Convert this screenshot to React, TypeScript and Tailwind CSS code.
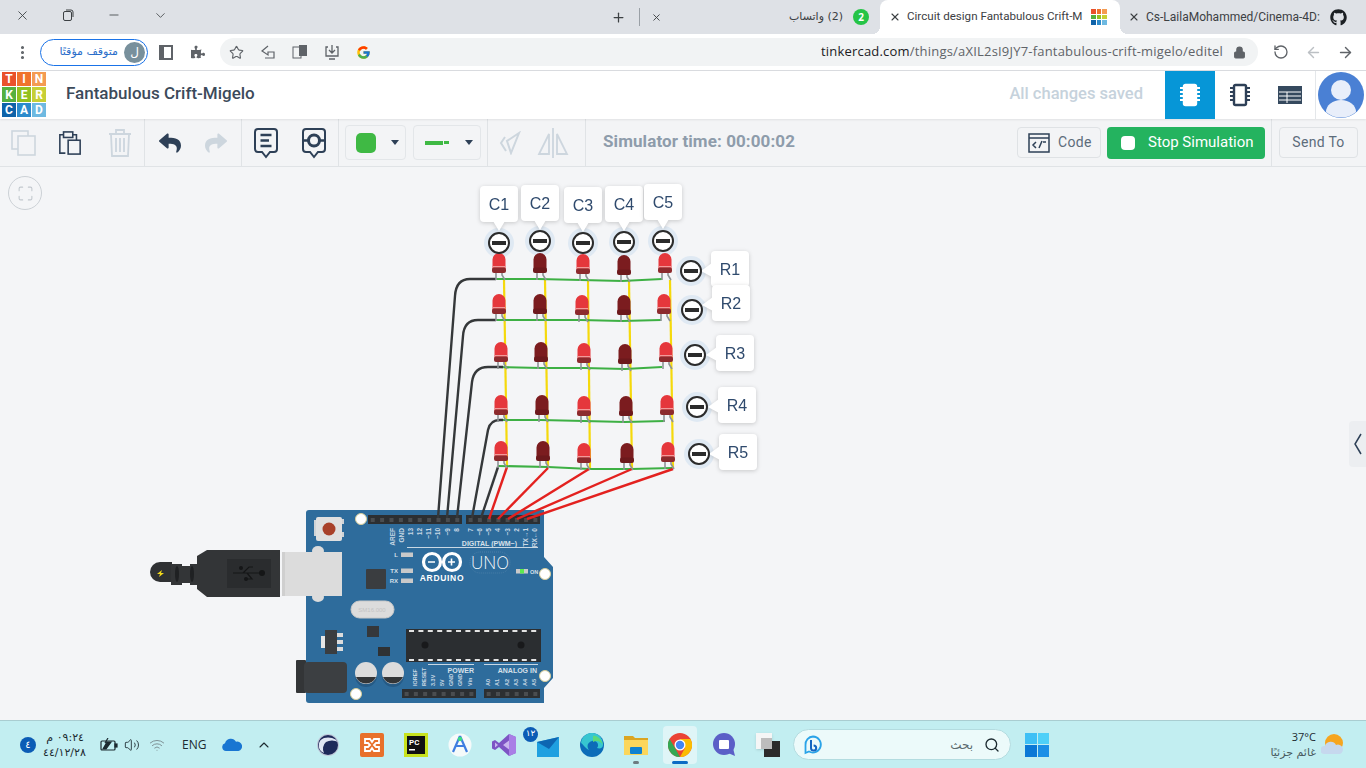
import React from 'react';
import { X, Minus, ChevronDown, Plus, Star, Lock, RotateCw, ArrowLeft, ArrowRight, Search, EllipsisVertical, ChevronUp, Volume2, Wifi, Maximize } from 'lucide-react';
import { FaGithub, FaPuzzlePiece, FaReply, FaShare } from 'react-icons/fa';
import { FcGoogle } from 'react-icons/fc';

const LOGO = [
  ['T', 'bg-[#e9512b]'], ['I', 'bg-[#f0732d]'], ['N', 'bg-[#f49b52]'],
  ['K', 'bg-[#55b03f]'], ['E', 'bg-[#93c01f]'], ['R', 'bg-[#c7cf35]'],
  ['C', 'bg-[#0f63a9]'], ['A', 'bg-[#2c8bcc]'], ['D', 'bg-[#6eb9e1]'],
];

const LEDS = [
  [[499, 253], [540, 253], [583, 254], [624, 255], [665, 253]],
  [[499, 294], [540, 294], [582, 295], [624, 295], [664, 294]],
  [[501, 342], [541, 342], [584, 343], [625, 344], [666, 342]],
  [[501, 395], [542, 395], [584, 396], [626, 396], [667, 395]],
  [[501, 441], [543, 441], [584, 443], [627, 443], [668, 442]],
];

const GREEN = [
  '496,279 538,279 581,280 622,281 662,279',
  '496,320 538,320 581,320 622,321 661,320',
  '498,367 541,368 584,368 625,369 662,367',
  '498,420 541,420 584,421 625,422 665,421',
  '498,466 548,467 590,469 632,469 672,468',
];

const YELLOW = [
  [504, 280, 507, 466],
  [545, 280, 548, 466],
  [588, 280, 590, 468],
  [629, 281, 632, 468],
  [670, 280, 673, 468],
];

const BLACK = [
  'M438 518 L455 296 Q456 279 470 279 L496 279',
  'M447 518 L463 336 Q464 320 478 320 L496 320',
  'M457 518 L472 382 Q474 367 488 367 L503 367',
  'M472 518 L488 430 Q490 420 500 420 L503 420',
  'M481 518 L498 467',
];

const RED = [
  [489, 519, 507, 467],
  [498, 519, 548, 468],
  [508, 519, 589, 469],
  [517, 519, 632, 469],
  [527, 519, 673, 469],
];

const TERMINALS = [
  [499, 243], [540, 241], [583, 243], [624, 242], [663, 241],
  [691, 271], [692, 310], [695, 355], [697, 407], [699, 454],
];

const COL_LABELS = [
  ['C1', 480, 186], ['C2', 521, 185], ['C3', 564, 187], ['C4', 605, 186], ['C5', 644, 184],
] as const;
const ROW_LABELS = [
  ['R1', 711, 251], ['R2', 712, 285], ['R3', 716, 335], ['R4', 718, 387], ['R5', 719, 434],
] as const;

const TOP_PINS = [
  ['AREF', 393], ['GND', 402], ['13', 411], ['12', 420], ['~11', 429], ['~10', 438], ['~9', 448], ['8', 457],
  ['7', 471], ['~6', 480], ['~5', 489], ['4', 498], ['~3', 508], ['2', 517], ['TX→1', 526], ['RX←0', 535],
] as const;
const BOTTOM_PINS = [
  ['IOREF', 416], ['RESET', 425], ['3.3V', 434], ['5V', 443], ['GND', 452], ['GND', 461], ['Vin', 471],
  ['A0', 489], ['A1', 498], ['A2', 508], ['A3', 517], ['A4', 526], ['A5', 535],
] as const;

const Led = ({ x, top, on }: { x: number; top: number; on: boolean }) => (
  <g>
    <path d={`M${x - 3} ${top + 18} V${top + 27} M${x + 3} ${top + 18} L${x + 3} ${top + 22} L${x + 6} ${top + 27}`} stroke="#8f9496" strokeWidth="1.6" fill="none" />
    <path d={`M${x - 6.5} ${top + 17} V${top + 6.5} a6.5 6.5 0 0 1 13 0 V${top + 17} Z`} fill={on ? '#e5373c' : '#7b1c1f'} />
    {on && <rect x={x - 6} y={top + 13} width="12" height="1.5" fill="#f29a9a" />}
    <rect x={x - 7} y={top + 14.5} width="14" height="5.5" rx="2" fill={on ? '#8c2a2d' : '#6c191c'} />
  </g>
);

const Terminal = ({ x, y }: { x: number; y: number }) => (
  <g>
    <circle cx={x} cy={y} r="10" fill="#fff" stroke="#2b2b2b" strokeWidth="2" />
    <rect x={x - 7} y={y - 2} width="14" height="4" fill="#2b2b2b" />
  </g>
);

const Header = ({ x, y, pins, w }: { x: number; y: number; pins: number; w: number }) => {
  const pitch = w / pins;
  return (
    <g>
      <rect x={x} y={y} width={w} height="9" fill="#2c2f32" />
      {Array.from({ length: pins }).map((_, i) => (
        <rect key={i} x={x + i * pitch + pitch / 2 - 2} y={y + 3} width="4" height="4" fill="#4a4d50" />
      ))}
    </g>
  );
};

const Circuit = () => (
  <svg width="1366" height="553" viewBox="0 167 1366 553" className="absolute inset-0" style={{ fontFamily: '"Liberation Sans", sans-serif' }}>
    {/* usb cable */}
    <path d="M172 562 H160 a10 10 0 0 0 0 20 H172 Z" fill="#2f3133" />
    <path d="M157 574 l5 -4 -1 3 3 0 -5 4 1 -3 z" fill="#f3d91b" />
    <path d="M171 564 h11 v2 h8 v-2 h7 v21 h-7 v-2 h-8 v2 h-11 Z" fill="#333537" />
    <ellipse cx="177" cy="574" rx="2" ry="8" fill="#1f2123" />
    <ellipse cx="192" cy="574" rx="2" ry="8" fill="#1f2123" />
    <path d="M197 556 L207 550 H280 V597 H207 L197 589 Z" fill="#333537" />
    <rect x="227" y="559" width="44" height="29" fill="#2a2c2e" />
    <path d="M233 573 H262 M243 573 L249 567 H253 M247 573 L252 579 H246" stroke="#151617" strokeWidth="1.2" fill="none" />
    <circle cx="262" cy="573" r="3" fill="#151617" />
    <circle cx="241" cy="568" r="2" fill="#151617" />
    <circle cx="246" cy="579" r="2" fill="#151617" />

    {/* board */}
    <path d="M309 510 H544 V557 L553 567 V678 L544 688 V703 H309 a3 3 0 0 1 -3 -3 V513 a3 3 0 0 1 3 -3 Z" fill="#2e6c9c" />
    <path d="M314 520 h4 v16 h-4 Z M340 519 h4 v5 h-4 Z M340 532 h4 v5 h-4 Z" fill="#cfd3d6" />
    <rect x="316" y="517" width="26" height="24" rx="2" fill="#dfe0e0" />
    <circle cx="329" cy="529" r="6.5" fill="#a8412a" />
    <ellipse cx="318" cy="551" rx="6" ry="5" fill="#dcdcdc" />
    <ellipse cx="318" cy="597" rx="6" ry="5" fill="#dcdcdc" />
    <rect x="282" y="552" width="60" height="44" fill="#dcdcdc" />
    <rect x="282" y="552" width="3" height="44" fill="#cfcfcf" />
    <rect x="351" y="601" width="43" height="17" rx="8.5" fill="#dcdcdc" stroke="#c8c8c8" />
    <text x="372" y="612" fontSize="6" fill="#c4c4c4" textAnchor="middle">SM16.000</text>
    <rect x="366" y="569" width="20" height="20" rx="1" fill="#3a3d40" />
    <rect x="367" y="626" width="12" height="11" fill="#35383b" />
    <rect x="378" y="647" width="12" height="9" fill="#2f3234" />
    <rect x="321" y="636" width="5" height="12" fill="#e6e6e6" />
    <rect x="325" y="630" width="12" height="24" fill="#3a3d40" />
    <path d="M337 633 h6 v4 h-6 Z M337 640 h6 v4 h-6 Z M337 647 h6 v4 h-6 Z" fill="#dcdcdc" />
    <rect x="296" y="660" width="10" height="33" rx="1" fill="#333537" />
    <rect x="304" y="662" width="43" height="31" rx="4" fill="#3c3f42" />
    {[366, 393].map((cx) => (
      <g key={cx}>
        <circle cx={cx} cy={676} r="11" fill="#255a85" />
        <circle cx={cx} cy={673} r="11" fill="#dcdcdc" />
        <path d={`M${cx - 10} 677 h20 a11 11 0 0 1 -20 0 Z`} fill="#333537" />
      </g>
    ))}
    <Header x={368} y={515} pins={10} w={94} />
    <Header x={466} y={515} pins={8} w={74} />
    <Header x={402} y={689} pins={8} w={74} />
    <Header x={484} y={689} pins={6} w={56} />
    <rect x="406" y="629" width="135" height="33" fill="#2b2e31" />
    {Array.from({ length: 14 }).map((_, i) => (
      <g key={i} fill="#e4e4e4">
        <rect x={409 + i * 9.4} y="630" width="5" height="2" />
        <rect x={409 + i * 9.4} y="659" width="5" height="2" />
      </g>
    ))}
    <circle cx="425" cy="645" r="3.5" fill="#18191b" />
    <circle cx="521" cy="645" r="3.5" fill="#18191b" />
    {[[361, 519], [545, 574], [545, 676], [356, 694]].map(([cx, cy]) => (
      <circle key={`${cx}-${cy}`} cx={cx} cy={cy} r="5.5" fill="#fff" stroke="#d9cf9a" />
    ))}

    {/* silk screen */}
    {TOP_PINS.map(([t, x]) => (
      <text key={t} transform={`rotate(-90 ${x} 528)`} x={x} y={528} fontSize="6.5" fontWeight="700" fill="#c9d8e4" textAnchor="end" dominantBaseline="middle">{t}</text>
    ))}
    {BOTTOM_PINS.map(([t, x], i) => (
      <text key={i} transform={`rotate(-90 ${x} 686)`} x={x} y={686} fontSize="5.5" fontWeight="700" fill="#c9d8e4" dominantBaseline="middle">{t}</text>
    ))}
    <text x="517" y="546" fontSize="7" fontWeight="700" fill="#d5e0ea" textAnchor="end">DIGITAL (PWM~)</text>
    <rect x="407" y="547" width="131" height="1" fill="#c9d8e4" />
    <rect x="428" y="664" width="46" height="1" fill="#c9d8e4" />
    <rect x="484" y="664" width="54" height="1" fill="#c9d8e4" />
    <text x="474" y="673" fontSize="7" fontWeight="700" fill="#d5e0ea" textAnchor="end">POWER</text>
    <text x="537" y="673" fontSize="7" fontWeight="700" fill="#d5e0ea" textAnchor="end">ANALOG IN</text>
    {[['L', 555], ['TX', 571], ['RX', 581]].map(([t, y]) => (
      <g key={t}>
        <text x="398" y={Number(y) + 2} fontSize="6" fontWeight="700" fill="#d5e0ea" textAnchor="end">{t}</text>
        <rect x="401" y={Number(y) - 2.5} width="12" height="4.5" fill="#c9c9c9" />
      </g>
    ))}
    <circle cx="432" cy="562" r="8.5" fill="none" stroke="#fff" strokeWidth="3.2" />
    <circle cx="452" cy="562" r="8.5" fill="none" stroke="#fff" strokeWidth="3.2" />
    <path d="M428 562 h7 M448 562 h7 M451.5 558.5 v7" stroke="#fff" strokeWidth="1.6" />
    <text x="442" y="581" fontSize="8.5" fontWeight="700" letterSpacing="0.7" fill="#fff" textAnchor="middle">ARDUINO</text>
    <rect x="470" y="552" width="40" height="21" rx="10" fill="none" stroke="#4a7fa9" strokeDasharray="1 1" />
    <text x="490" y="569" fontSize="17" fill="#fff" textAnchor="middle" style={{ fontFamily: 'Inter, sans-serif', fontWeight: 200 }}>UNO</text>
    <rect x="516" y="569" width="12" height="4.5" fill="#c9c9c9" />
    <rect x="520" y="569" width="4" height="4.5" fill="#5dea4e" />
    <text x="530" y="574" fontSize="5.5" fontWeight="700" fill="#d5e0ea">ON</text>

    {/* terminal halos sit below the leds */}
    {TERMINALS.map(([x, y]) => (
      <circle key={x} cx={x} cy={y} r="15" fill="#dfe9f3" />
    ))}

    {/* wires go under the leds */}
    {YELLOW.map(([a, b, c, d]) => (
      <line key={a} x1={a} y1={b} x2={c} y2={d} stroke="#f5d90c" strokeWidth="2.2" />
    ))}
    {GREEN.map((p) => (
      <polyline key={p} points={p} fill="none" stroke="#3db044" strokeWidth="2.2" />
    ))}
    {BLACK.map((d) => (
      <path key={d} d={d} fill="none" stroke="#35383a" strokeWidth="2.4" />
    ))}
    {RED.map(([a, b, c, d]) => (
      <line key={a} x1={a} y1={b} x2={c} y2={d} stroke="#e3211f" strokeWidth="2.4" />
    ))}
    {LEDS.flat().map(([x, top], i) => (
      <Led key={i} x={x} top={top} on={i % 5 !== 1 && i % 5 !== 3} />
    ))}

    {/* terminal labels */}
    {COL_LABELS.map(([t, x, y]) => (
      <g key={t} className="drop-shadow-[0_1px_2px_rgba(0,0,0,0.18)]">
        <path d={`M${x + 13} ${y + 35} L${x + 19} ${y + 45} L${x + 25} ${y + 35} Z`} fill="#fff" />
        <rect x={x} y={y} width="38" height="36" rx="4" fill="#fff" />
        <text x={x + 19} y={y + 24} fontSize="16" fill="#2f4a6d" textAnchor="middle">{t}</text>
      </g>
    ))}
    {ROW_LABELS.map(([t, x, y]) => (
      <g key={t} className="drop-shadow-[0_1px_2px_rgba(0,0,0,0.18)]">
        <path d={`M${x + 1} ${y + 12} L${x - 10} ${y + 20} L${x + 1} ${y + 26} Z`} fill="#fff" />
        <rect x={x} y={y} width="38" height="36" rx="4" fill="#fff" />
        <text x={x + 19} y={y + 24} fontSize="16" fill="#2f4a6d" textAnchor="middle">{t}</text>
      </g>
    ))}
    {TERMINALS.map(([x, y]) => (
      <Terminal key={x} x={x} y={y} />
    ))}
  </svg>
);

const ChipIcon = ({ className, fill }: { className: string; fill: string }) => (
  <svg width="24" height="24" viewBox="0 0 24 24" className={className}>
    <rect x="6" y="2" width="12" height="20" rx="1.5" fill={fill} stroke="currentColor" strokeWidth="2.4" />
    <path d="M2 5h3M2 9h3M2 13h3M2 17h3M19 5h3M19 9h3M19 13h3M19 17h3" stroke="currentColor" strokeWidth="2" />
  </svg>
);

const Note = ({ eye }: { eye?: boolean }) => (
  <svg width="26" height="32" viewBox="0 0 26 32" fill="none" stroke="#2e4057" strokeWidth="2">
    <path d="M5 2 H21 a3 3 0 0 1 3 3 V22 a3 3 0 0 1 -3 3 H17 L13 30 L9 25 H5 a3 3 0 0 1 -3 -3 V5 a3 3 0 0 1 3 -3 Z" />
    {eye ? (
      <>
        <path d="M3 13.5 H7 M19 13.5 H23" strokeWidth="2.6" />
        <circle cx="13" cy="13.5" r="5.5" strokeWidth="3" />
      </>
    ) : (
      <path d="M7.5 8 H18.5 M7.5 13.5 H16 M7.5 19 H18.5" strokeWidth="2.4" />
    )}
  </svg>
);

const Divider = () => <div className="w-px self-stretch bg-[#e0e3e6]" />;

const TaskSlot = ({ children, active }: { children: React.ReactNode; active?: boolean }) => (
  <div className={`relative h-[38px] flex items-center justify-center rounded ${active ? 'w-[34px] mx-[5px] bg-[#dff5f7]' : 'w-[44px]'}`}>{children}</div>
);

export default function App() {
  return (
    <div className="w-[1366px] h-[768px] flex flex-col overflow-hidden bg-white" style={{ fontFamily: '"Open Sans", "DejaVu Sans", sans-serif' }}>
      {/* tab strip */}
      <div className="h-[34px] flex bg-[#dee1e6] text-[#3c4043]">
        <div className="w-[45px] flex items-center justify-center pb-1"><X size={15} strokeWidth={1.4} /></div>
        <div className="w-[46px] flex items-center justify-center pb-1">
          <svg width="12" height="12" viewBox="0 0 12 12" fill="none" stroke="currentColor"><rect x="1.5" y="2.5" width="8" height="9" rx="1.5" /><path d="M4 1 H9 a2 2 0 0 1 2 2 V8" /></svg>
        </div>
        <div className="w-[46px] flex items-center justify-center pb-1"><Minus size={14} strokeWidth={1.4} /></div>
        <div className="w-[46px] flex items-center justify-center pb-1"><ChevronDown size={15} strokeWidth={1.3} /></div>
        <div className="ml-[426px] w-[18px] flex items-center justify-center"><Plus size={15} strokeWidth={2} /></div>
        <div className="ml-[12px] my-[8px] w-px bg-[#9aa0a6]" />
        <div className="ml-[10px] w-[12px] flex items-center justify-center"><X size={11} strokeWidth={2} /></div>
        <div className="ml-[127px] w-[53px] flex items-center justify-end text-[11px] whitespace-nowrap" dir="rtl" style={{ fontFamily: '"DejaVu Sans", sans-serif' }}>(2) واتساب</div>
        <div className="w-[38px] flex items-center justify-center">
          <div className="w-4 h-4 rounded-full bg-[#25c447] flex items-center justify-center text-[10px] font-bold text-white">2</div>
        </div>
        <div className="relative w-[240px] bg-white rounded-t-[8px] flex items-center text-[11.6px] text-[#3c4043]" style={{ fontFamily: 'Roboto, sans-serif' }}>
          <div className="absolute left-[-8px] bottom-0 w-2 h-2 bg-[radial-gradient(circle_at_0_0,transparent_8px,white_8px)]" />
          <div className="absolute right-[-8px] bottom-0 w-2 h-2 bg-[radial-gradient(circle_at_100%_0,transparent_8px,white_8px)]" />
          <X size={12} strokeWidth={2.2} className="ml-[9px] shrink-0" />
          <span className="ml-[6px] w-[176px] whitespace-nowrap">Circuit design Fantabulous Crift-M</span>
          <div className="ml-[8px] w-[16px] h-[16px] grid grid-cols-3 gap-px shrink-0">
            {LOGO.map(([t, c]) => <div key={t} className={c} />)}
          </div>
        </div>
        <div className="flex-1 flex items-center text-[12px]" style={{ fontFamily: 'Roboto, sans-serif' }}>
          <X size={12} strokeWidth={2.2} className="ml-[8px] shrink-0" />
          <span className="ml-[6px] w-[172px] whitespace-nowrap">Cs-LailaMohammed/Cinema-4D:</span>
          <FaGithub size={17} className="ml-[12px] text-[#1b1f23] shrink-0" />
        </div>
      </div>

      {/* address bar */}
      <div className="h-[37px] flex items-center bg-white border-b border-[#dadce0] text-[#5f6368]">
        <div className="w-[40px] flex justify-center pl-[4px]"><EllipsisVertical size={17} strokeWidth={2.4} /></div>
        <div className="w-[108px] h-[27px] flex items-center justify-end rounded-full border border-[#1a73e8] pr-[2px]">
          <span className="text-[11px] text-[#2a6dc9] mr-[6px] whitespace-nowrap" dir="rtl" style={{ fontFamily: '"DejaVu Sans", sans-serif' }}>متوقف مؤقتًا</span>
          <div className="w-[21px] h-[21px] rounded-full bg-[#78909c] text-white text-[12px] flex items-center justify-center">ل</div>
        </div>
        <div className="w-[36px] flex justify-center">
          <div className="w-[14px] h-[15px] border-[2px] border-[#5f6368] border-l-[5px]" />
        </div>
        <div className="w-[28px] flex justify-center"><FaPuzzlePiece size={14} /></div>
        <div className="ml-[8px] w-[1038px] h-[28px] rounded-full bg-[#f1f3f4] flex items-center pl-[9px]">
          <Star size={15} strokeWidth={1.8} />
          <svg width="16" height="16" viewBox="0 0 16 16" fill="none" stroke="currentColor" strokeWidth="1.2" className="ml-[16px]">
            <path d="M8 2 L2 7 L8 11 V8 H14 V14 H5" />
          </svg>
          <svg width="16" height="16" viewBox="0 0 16 16" className="ml-[16px]">
            <rect x="1" y="3" width="8" height="11" fill="none" stroke="currentColor" />
            <rect x="7" y="1" width="8" height="11" fill="currentColor" />
          </svg>
          <svg width="16" height="16" viewBox="0 0 16 16" fill="none" stroke="currentColor" strokeWidth="1.3" className="ml-[16px]">
            <path d="M4 3 H2 V12 H14 V3 H12 M8 1 V9 M5 6 L8 9 L11 6 M5 15 H11" />
          </svg>
          <FcGoogle size={15} className="ml-[16px]" />
          <span className="ml-auto text-[13px] tracking-[0.2px] whitespace-nowrap"><span className="text-[#202124]">tinkercad.com</span><span className="text-[#5f6368]">/things/aXIL2sI9JY7-fantabulous-crift-migelo/editel</span></span>
          <Lock size={13} className="ml-[10px] mr-[12px]" fill="currentColor" />
        </div>
        <div className="ml-[8px] flex">
          <div className="w-[30px] flex justify-center"><RotateCw size={16} strokeWidth={2} className="-scale-x-100" /></div>
          <div className="ml-[2px] w-[30px] flex justify-center text-[#bcc0c4]"><ArrowLeft size={17} strokeWidth={2} /></div>
          <div className="ml-[2px] w-[30px] flex justify-center"><ArrowRight size={17} strokeWidth={2} /></div>
        </div>
      </div>

      {/* tinkercad header */}
      <div className="h-[48px] flex items-stretch bg-white shadow-[0_1px_2px_rgba(0,0,0,0.08)] z-10" style={{ fontFamily: 'Roboto, sans-serif' }}>
        <div className="ml-[2px] mt-px w-[44px] h-[45px] grid grid-cols-3 grid-rows-3 gap-px">
          {LOGO.map(([t, c]) => (
            <div key={t} className={`${c} flex items-center justify-center text-white text-[12px] font-bold`}>{t}</div>
          ))}
        </div>
        <div className="ml-[20px] pb-[3px] flex items-center text-[17px] font-medium text-[#3c4a5a]">Fantabulous Crift-Migelo</div>
        <div className="ml-auto mr-[22px] pb-[2px] flex items-center text-[16.5px] font-medium text-[#c6d2dc]">All changes saved</div>
        <div className="w-[50px] bg-[#0696d7] flex items-center justify-center text-white"><ChipIcon className="text-white" fill="#fff" /></div>
        <div className="w-[50px] flex items-center justify-center text-[#2e4057]"><ChipIcon className="" fill="none" /></div>
        <div className="w-[50px] flex items-center justify-center">
          <svg width="24" height="18" viewBox="0 0 24 18">
            <rect width="24" height="18" fill="#35495e" />
            <path d="M1 6 H23 M1 10 H23 M1 14 H23 M9 6 V17" stroke="#fff" strokeWidth="1" />
          </svg>
        </div>
        <div className="w-[51px] border-l border-[#e4e7ea] flex items-center justify-center">
          <svg width="46" height="46" viewBox="0 0 46 46">
            <circle cx="23" cy="23" r="23" fill="#4a80d4" />
            <circle cx="23" cy="18" r="10" fill="#e8eefa" />
            <path d="M8 40 a15 12 0 0 1 30 0 a23 23 0 0 1 -30 0 Z" fill="#e8eefa" />
          </svg>
        </div>
      </div>

      {/* toolbar */}
      <div className="h-[48px] flex items-stretch bg-[#f3f4f6] border-b border-[#e0e3e6]" style={{ fontFamily: 'Roboto, sans-serif' }}>
        <div className="w-[144px] flex items-center">
          <svg width="26" height="26" viewBox="0 0 26 26" fill="none" stroke="#cdd6de" strokeWidth="1.6" className="ml-[11px]">
            <rect x="1" y="1" width="16" height="18" /><rect x="7" y="6" width="17" height="19" fill="#f3f4f6" />
          </svg>
          <svg width="24" height="28" viewBox="0 0 26 30" fill="none" stroke="#2e4057" strokeWidth="1.7" className="ml-[21px]">
            <path d="M16 6 H20 V12 M8 26 H2 V6 H6" /><rect x="6" y="3" width="10" height="6" /><rect x="11" y="12" width="13" height="15" />
          </svg>
          <svg width="24" height="28" viewBox="0 0 24 28" fill="none" stroke="#cdd6de" strokeWidth="1.8" className="ml-[26px]">
            <path d="M1 5 H23 M8 4 V1 H16 V4 M3 5 L4 27 H20 L21 5 M8 9 V23 M12 9 V23 M16 9 V23" />
          </svg>
        </div>
        <Divider />
        <div className="w-[96px] flex items-center">
          <FaReply size={22} className="ml-[14px] text-[#2e4057]" />
          <FaShare size={22} className="ml-[24px] text-[#cdd6de]" />
        </div>
        <Divider />
        <div className="w-[96px] flex items-center">
          <div className="ml-[11px]"><Note /></div>
          <div className="ml-[22px]"><Note eye /></div>
        </div>
        <Divider />
        <div className="w-[148px] flex items-center">
          <div className="ml-[6px] w-[61px] h-[35px] rounded border border-[#e3e6e9] flex items-center">
            <div className="ml-[10px] w-[20px] h-[20px] rounded-[5px] bg-[#3fb944]" />
            <div className="ml-[15px] w-0 h-0 border-x-[4px] border-x-transparent border-t-[5px] border-t-[#2e4057]" />
          </div>
          <div className="ml-[7px] w-[68px] h-[35px] rounded border border-[#e3e6e9] flex items-center">
            <div className="ml-[11px] w-[18px] h-[4px] bg-[#3fb944]" />
            <div className="ml-[1px] w-[5px] h-[3px] bg-[#3fb944]" />
            <div className="ml-[16px] w-0 h-0 border-x-[4px] border-x-transparent border-t-[5px] border-t-[#2e4057]" />
          </div>
        </div>
        <Divider />
        <div className="w-[97px] flex items-center">
          <svg width="22" height="24" viewBox="0 0 22 24" fill="none" stroke="#cdd6de" strokeWidth="2" className="ml-[11px]">
            <path d="M20 2 L8 10 L12 22 Z M6 6 L2 12 L7 20" />
          </svg>
          <svg width="32" height="32" viewBox="0 0 32 32" fill="none" stroke="#cdd6de" strokeWidth="1.8" className="ml-[16px]">
            <path d="M16 1 V31 M12 7 L2 27 H12 Z M20 7 L30 27 H20 Z" />
          </svg>
        </div>
        <Divider />
        <div className="ml-[17px] pb-[1px] flex items-center text-[17px] font-bold text-[#8e9cab] tracking-[0.1px]">Simulator time: 00:00:02</div>
        <div className="ml-auto flex items-center">
          <div className="w-[84px] h-[31px] rounded-sm border border-[#dfe2e5] flex items-center text-[14px] text-[#5d6c7b]">
            <svg width="22" height="20" viewBox="0 0 22 20" fill="none" stroke="#2e4057" strokeWidth="1.5" className="ml-[10px]">
              <rect x="1" y="1" width="20" height="18" /><path d="M1 5 H21" /><path d="M8 9 L5 12 L8 15 M11 15 L14 8 M15 9 L18 9" />
            </svg>
            <span className="ml-[8px] tracking-[0.3px]">Code</span>
          </div>
          <div className="ml-[6px] w-[158px] h-[32px] rounded-sm bg-[#24b35f] flex items-center text-white text-[15px]">
            <div className="ml-[14px] w-[14px] h-[14px] rounded-sm bg-white" />
            <span className="ml-[13px]">Stop Simulation</span>
          </div>
          <div className="ml-[6px] w-px self-stretch bg-[#e0e3e6]" />
          <div className="ml-[7px] mr-[8px] w-[79px] h-[31px] rounded-sm border border-[#dfe2e5] flex items-center justify-center text-[14px] text-[#5d6c7b] tracking-[0.3px]">Send To</div>
        </div>
      </div>

      {/* canvas */}
      <div className="relative flex-1 bg-[#f4f5f7] overflow-hidden">
        <Circuit />
        <div className="absolute left-[8px] top-[9px] w-[34px] h-[34px] rounded-full border border-[#ccd1d6] flex items-center justify-center text-[#c2c8ce]">
          <Maximize size={17} strokeWidth={1.5} />
        </div>
        <div className="absolute right-0 top-[254px] w-[17px] h-[46px] bg-[#eceef1] rounded-l flex items-center justify-center">
          <svg width="10" height="24" viewBox="0 0 10 24" fill="none" stroke="#2e4057" strokeWidth="1.5"><path d="M8 2 L2 12 L8 22" /></svg>
        </div>
      </div>

      {/* taskbar */}
      <div className="h-[48px] flex items-center bg-[#c2eef1] border-t border-[#a9cdd1] text-[#1c2a30]">
        <div className="ml-[20px] w-4 h-4 rounded-full bg-[#0b5cb5] text-white text-[10px] flex items-center justify-center" style={{ fontFamily: '"DejaVu Sans", sans-serif' }}>٤</div>
        <div className="ml-[7px] w-[44px] text-[11px] leading-[15px]" style={{ fontFamily: '"DejaVu Sans", sans-serif' }}>
          <div dir="rtl" className="text-right pr-[3px] whitespace-nowrap">٠٩:٢٤ م</div>
          <div dir="ltr" className="whitespace-nowrap">٤٤/١٢/٢٨</div>
        </div>
        <svg width="18" height="14" viewBox="0 0 18 14" fill="none" stroke="currentColor" strokeWidth="1.2" className="ml-[13px]">
          <rect x="1" y="3" width="14" height="9" rx="1" /><rect x="15" y="6" width="2" height="3" fill="currentColor" /><path d="M3 11 L7 4 H11 L6 11 Z M8 0 L5 5" fill="currentColor" />
        </svg>
        <Volume2 size={16} strokeWidth={1.3} className="ml-[6px]" />
        <Wifi size={16} strokeWidth={1.5} className="ml-[9px] text-[#7f9296]" />
        <div className="ml-[17px] w-[24px] text-[12px]">ENG</div>
        <svg width="20" height="13" viewBox="0 0 20 13" className="ml-[16px]">
          <path d="M4 13 a4 4 0 0 1 -1 -7.8 a6 6 0 0 1 11 -1.5 a4.5 4.5 0 0 1 2.5 9.3 Z" fill="#1976d2" />
        </svg>
        <ChevronUp size={16} strokeWidth={1.6} className="ml-[14px]" />

        <div className="ml-[34px] flex items-center">
          <TaskSlot>
            <svg width="24" height="24" viewBox="0 0 24 24"><circle cx="12" cy="12" r="11" fill="#bfc8d8" /><circle cx="12" cy="12" r="10" fill="#1e2a5a" /><path d="M22 9 A11 8 0 0 0 8 5 A8 8 0 0 0 8 20 A9 9 0 0 1 10 9 A9 6 0 0 1 22 9 Z" fill="#dfe5f2" /></svg>
          </TaskSlot>
          <TaskSlot>
            <svg width="24" height="24" viewBox="0 0 24 24"><rect width="24" height="24" rx="2" fill="#e8702b" /><path d="M5 6 H10 L12 9 L14 6 H19 V10 H16 L14 12 L16 14 H19 V18 H14 L12 15 L10 18 H5 V14 H8 L10 12 L8 10 H5 Z" fill="none" stroke="#fff" strokeWidth="1.8" /></svg>
          </TaskSlot>
          <TaskSlot>
            <svg width="24" height="24" viewBox="0 0 24 24"><rect width="24" height="24" fill="#c8e21f" /><rect x="3" y="3" width="18" height="18" fill="#111" /><text x="5" y="12" fontSize="8" fontWeight="700" fill="#fff" style={{ fontFamily: 'Roboto, sans-serif' }}>PC</text><rect x="5" y="16" width="6" height="1.5" fill="#fff" /></svg>
          </TaskSlot>
          <TaskSlot>
            <svg width="24" height="24" viewBox="0 0 24 24"><circle cx="12" cy="12" r="11.5" fill="#f5fafa" /><path d="M12 3 L5 19 M12 3 L19 19 M7 13 H17" stroke="#3e7de0" strokeWidth="2.2" fill="none" /><circle cx="12" cy="6" r="2.2" fill="#3ddc84" /></svg>
          </TaskSlot>
          <TaskSlot>
            <svg width="24" height="24" viewBox="0 0 24 24"><path d="M17 1 L24 4 V20 L17 23 L7 14 L3 17 L0 15.5 V8.5 L3 7 L7 10 Z" fill="#7d54c4" /><path d="M17 1 L24 4 V20 L17 23 Z" fill="#a97ee6" /><path d="M3 9.5 V14.5 L6 12 Z M17 7.5 L11 12 L17 16.5 Z" fill="#c9b5ee" /></svg>
          </TaskSlot>
          <TaskSlot>
            <svg width="24" height="24" viewBox="0 0 24 24" className="mt-[2px]"><path d="M1 8 L23 3 V23 H1 Z" fill="#1fa0e0" /><path d="M1 8 L23 3 L13 15 Z" fill="#0d66b2" /></svg>
            <div className="absolute left-[-3px] top-[1px] w-[15px] h-[15px] rounded-full bg-[#0b5cb5] text-white text-[9px] flex items-center justify-center" style={{ fontFamily: '"DejaVu Sans", sans-serif' }}>١٢</div>
          </TaskSlot>
          <TaskSlot>
            <svg width="24" height="24" viewBox="0 0 24 24"><circle cx="12" cy="12" r="12" fill="#0c6cb8" /><path d="M1 10 A11 11 0 0 1 23 12 C23 15 20 16 17 15 C20 11 16 7 12 8 C8 9 6 13 9 17 C5 15 3 11 1 10 Z" fill="#37c6d0" /><path d="M13 9 a7 7 0 0 1 10 3 C22 7 17 2 13 3 Z" fill="#5bd97a" /></svg>
          </TaskSlot>
          <TaskSlot>
            <svg width="24" height="24" viewBox="0 0 24 24"><path d="M0 3 H9 L11 5 H24 V22 H0 Z" fill="#dba521" /><rect y="7" width="24" height="15" fill="#fbd65b" /><rect x="6" y="14" width="12" height="7" rx="1" fill="#0f82d0" /></svg>
            <div className="absolute bottom-0 w-[6px] h-[3px] rounded-full bg-[#6d7b80]" />
          </TaskSlot>
          <TaskSlot active>
            <svg width="24" height="24" viewBox="0 0 24 24"><circle cx="12" cy="12" r="12" fill="#ea4335" /><path d="M12 24 A12 12 0 0 1 1.6 6 L7 15 Z" fill="#34a853" /><path d="M12 24 A12 12 0 0 0 22.4 6 H12 L17 15 Z" fill="#fbbc04" /><circle cx="12" cy="12" r="5.5" fill="#fff" /><circle cx="12" cy="12" r="4.2" fill="#4285f4" /></svg>
            <div className="absolute bottom-0 w-[16px] h-[3px] rounded-full bg-[#0b6cc4]" />
          </TaskSlot>
          <TaskSlot>
            <svg width="24" height="24" viewBox="0 0 24 24"><circle cx="12" cy="11" r="11" fill="#5b5fc7" /><path d="M16 20 L23 23 L21 15 Z" fill="#5b5fc7" /><rect x="7" y="7" width="10" height="9" rx="1" fill="#fff" /></svg>
          </TaskSlot>
          <TaskSlot>
            <div className="relative w-[24px] h-[24px]">
              <div className="absolute left-0 top-0 w-[16px] h-[16px] bg-[#f5f6f6] shadow-sm" />
              <div className="absolute right-0 bottom-0 w-[16px] h-[16px] bg-[#2b2b2b]" />
              <div className="absolute left-[5px] top-[5px] w-[11px] h-[11px] bg-[#bdbdbd]" />
            </div>
          </TaskSlot>
        </div>

        <div className="ml-[3px] w-[218px] h-[31px] rounded-full bg-[#ecfafa] border border-[#b3dce0] flex items-center">
          <svg width="20" height="20" viewBox="0 0 20 20" className="ml-[9px]" fill="none"><path d="M10 1.5 a8 8 0 1 1 -4 15 L2.5 18 V10 a8 8 0 0 1 7.5 -8.5 Z" stroke="#2aa3e8" strokeWidth="1.8" /><path d="M8 5 V13 a2.6 2.6 0 1 0 2.6 -2.6" stroke="#1565c0" strokeWidth="2" /></svg>
          <span className="ml-auto text-[12px] text-[#5a6a6e]" dir="rtl" style={{ fontFamily: '"DejaVu Sans", sans-serif' }}>بحث</span>
          <Search size={16} strokeWidth={2} className="ml-[11px] mr-[10px]" />
        </div>

        <div className="ml-[14px] w-[24px] h-[24px] grid grid-cols-2 gap-px">
          <div className="bg-[#3fc0f5]" />
          <div className="bg-[#4fd0f8]" />
          <div className="bg-[#0a78d6]" />
          <div className="bg-[#1c8fe6]" />
        </div>

        <div className="ml-auto flex flex-col items-end text-[11px] leading-[16px]">
          <span className="font-normal">37°C</span>
          <span dir="rtl" className="text-[#46585c]" style={{ fontFamily: '"DejaVu Sans", sans-serif' }}>غائم جزئيًا</span>
        </div>
        <svg width="24" height="24" viewBox="0 0 24 24" className="ml-[5px] mr-[21px]">
          <circle cx="13" cy="10" r="9" fill="#f6a51f" />
          <path d="M3 21 a4 4 0 0 1 1 -8 a6 6 0 0 1 11 -1 a4.5 4.5 0 0 1 4 9 Z" fill="#c6d8ee" />
        </svg>
      </div>
    </div>
  );
}
